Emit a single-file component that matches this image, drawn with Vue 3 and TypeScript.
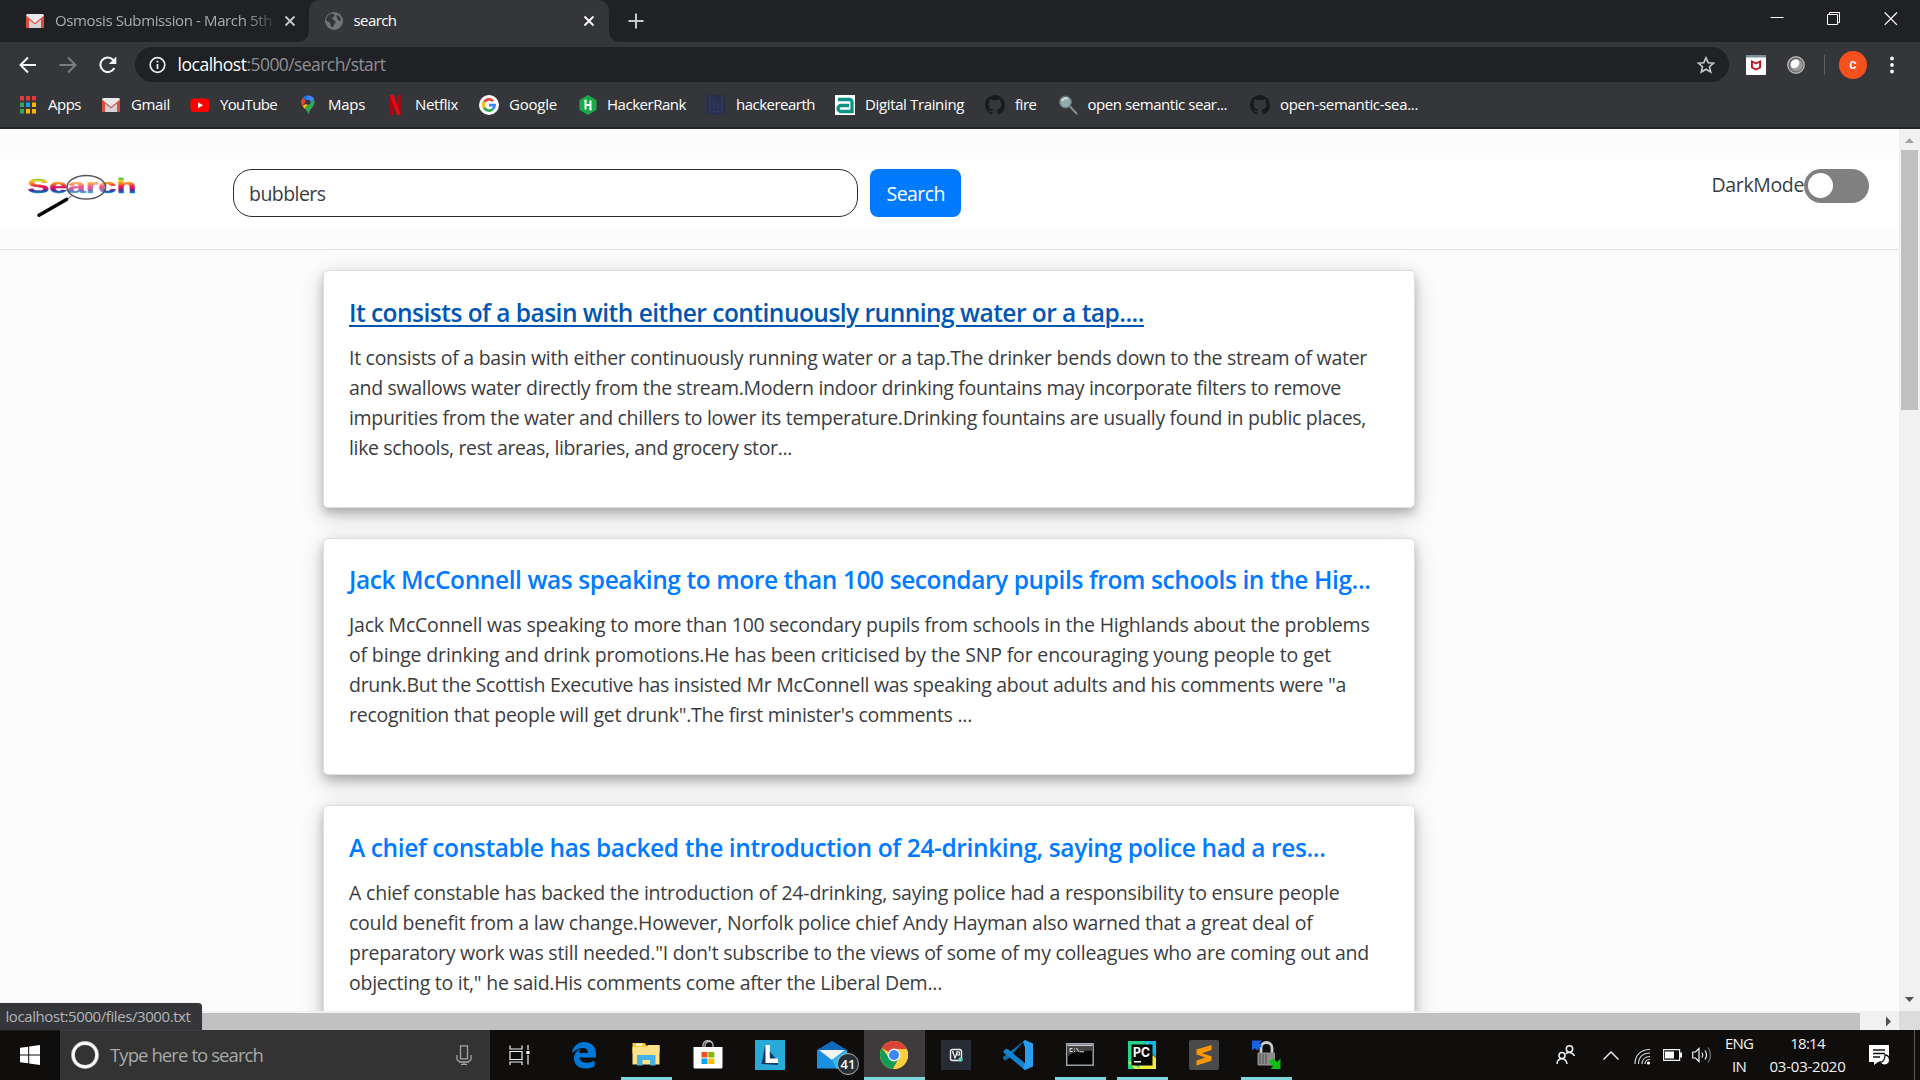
<script setup lang="ts">
interface Line { text: string; width: number }
interface Result { title: Line; hovered?: boolean; lines: Line[] }
interface Bookmark { icon: string; label: string; width: number; slot?: number }
interface TaskItem { id: string; open?: boolean; active?: boolean }

// Tracks a single line of text so that it occupies the given width.
const vFit = {
  mounted(el: HTMLElement, binding: { value: number }) {
    el.style.letterSpacing = '0px'
    const range = document.createRange()
    range.selectNodeContents(el)
    const natural = range.getBoundingClientRect().width
    const count = (el.textContent ?? '').trim().length
    if (count > 0) el.style.letterSpacing = `${((binding.value - natural) / count).toFixed(4)}px`
  },
}

const bookmarks: Bookmark[] = [
  { icon: 'apps', label: 'Apps', width: 33 },
  { icon: 'gmail', label: 'Gmail', width: 39 },
  { icon: 'youtube', label: 'YouTube', width: 57, slot: 58 },
  { icon: 'maps', label: 'Maps', width: 37 },
  { icon: 'netflix', label: 'Netflix', width: 43, slot: 44 },
  { icon: 'google', label: 'Google', width: 48 },
  { icon: 'hackerrank', label: 'HackerRank', width: 79 },
  { icon: 'hackerearth', label: 'hackerearth', width: 79 },
  { icon: 'digital', label: 'Digital Training', width: 99, slot: 100 },
  { icon: 'github', label: 'fire', width: 21.5, slot: 22.5 },
  { icon: 'lens', label: 'open semantic sear...', width: 139.5, slot: 142.5 },
  { icon: 'github', label: 'open-semantic-sea...', width: 138 },
]

const results: Result[] = [
  {
    title: { text: 'It consists of a basin with either continuously running water or a tap....', width: 795 },
    hovered: true,
    lines: [
      { text: 'It consists of a basin with either continuously running water or a tap.The drinker bends down to the stream of water', width: 1018 },
      { text: 'and swallows water directly from the stream.Modern indoor drinking fountains may incorporate filters to remove', width: 992 },
      { text: 'impurities from the water and chillers to lower its temperature.Drinking fountains are usually found in public places,', width: 1017 },
      { text: 'like schools, rest areas, libraries, and grocery stor...', width: 443 },
    ],
  },
  {
    title: { text: 'Jack McConnell was speaking to more than 100 secondary pupils from schools in the Hig...', width: 1021.5 },
    lines: [
      { text: 'Jack McConnell was speaking to more than 100 secondary pupils from schools in the Highlands about the problems', width: 1020.5 },
      { text: 'of binge drinking and drink promotions.He has been criticised by the SNP for encouraging young people to get', width: 982 },
      { text: 'drunk.But the Scottish Executive has insisted Mr McConnell was speaking about adults and his comments were "a', width: 997 },
      { text: 'recognition that people will get drunk".The first minister\'s comments ...', width: 623 },
    ],
  },
  {
    title: { text: 'A chief constable has backed the introduction of 24-drinking, saying police had a res...', width: 976.5 },
    lines: [
      { text: 'A chief constable has backed the introduction of 24-drinking, saying police had a responsibility to ensure people', width: 990.5 },
      { text: 'could benefit from a law change.However, Norfolk police chief Andy Hayman also warned that a great deal of', width: 963.5 },
      { text: 'preparatory work was still needed."I don\'t subscribe to the views of some of my colleagues who are coming out and', width: 1020 },
      { text: 'objecting to it," he said.His comments come after the Liberal Dem...', width: 593 },
    ],
  },
]

const tasks: TaskItem[] = [
  { id: 'edge' },
  { id: 'explorer', open: true },
  { id: 'store' },
  { id: 'lex' },
  { id: 'mail' },
  { id: 'chrome', open: true, active: true },
  { id: 'infy' },
  { id: 'vscode' },
  { id: 'cmd', open: true },
  { id: 'pycharm', open: true },
  { id: 'sublime' },
  { id: 'lock', open: true },
]
</script>

<template>
  <div class="screen">
    <div class="tabstrip">
      <div class="tab tab-idle">
        <svg class="tab-icon" width="20" height="20" viewBox="0 0 20 20">
          <rect x="1" y="3" width="18" height="14" rx="1.5" fill="#e9e9e9" />
          <path d="M4 17V8l6 5 6-5v9z" fill="#d5d5d5" />
          <path d="M1 17V4.500L10 12l9-7.500V17h-3V8.500L10 13.500 4 8.500V17z" fill="#dd4b3e" />
        </svg>
        <span class="tab-label idle-label"><span v-fit="217" class="fit">Osmosis Submission - March 5th</span></span>
        <svg class="close" width="12" height="12" viewBox="0 0 12 12"><path d="M1.500 1.500l9 9M10.500 1.500l-9 9" stroke="#c8c9cb" stroke-width="1.800" /></svg>
      </div>
      <div class="tab tab-active">
        <svg class="tab-icon" width="20" height="20" viewBox="0 0 20 20">
          <circle cx="10" cy="10" r="9" fill="#70757a" />
          <path d="M7 2.500c3 0 4 1 3.500 2.500S8 6 8.500 8s2.500.5 3 2.500-1 1.500-1.500 3-1 3-2.500 2.500-.5-3-2-4.500-3-1-3.500-2.500C2.500 5.500 5 3 7 2.500zM13 4c2 .5 4 3 4 5.500-1.500 1-3 0-3.500-1.500S12 5 13 4z" fill="#35363a" />
        </svg>
        <span class="tab-label"><span v-fit="43" class="fit">search</span></span>
        <svg class="close" width="12" height="12" viewBox="0 0 12 12"><path d="M1.500 1.500l9 9M10.500 1.500l-9 9" stroke="#fff" stroke-width="1.800" /></svg>
      </div>
      <svg class="plus" width="16" height="16" viewBox="0 0 16 16"><path d="M8 0.500v15M0.500 8h15" stroke="#c8c9cb" stroke-width="2" /></svg>
      <div class="window-controls">
        <svg width="14" height="14" viewBox="0 0 14 14"><path d="M0.500 5.500h13" stroke="#fff" /></svg>
        <svg width="14" height="14" viewBox="0 0 14 14"><path d="M0.500 2.500h10v10H0.500zM2.500 2.500V0.500h10v10h-2" fill="none" stroke="#fff" /></svg>
        <svg width="14" height="14" viewBox="0 0 14 14"><path d="M0.700 0.500l12.300 12.300M13 0.500L0.700 12.800" stroke="#fff" stroke-width="1.200" /></svg>
      </div>
    </div>

    <div class="toolbar">
      <svg class="nav-icon" width="18" height="18" viewBox="0 0 18 18"><path d="M17 9H2M9 1.500L1.500 9 9 16.500" fill="none" stroke="#f1f3f4" stroke-width="2" /></svg>
      <svg class="nav-icon" width="18" height="18" viewBox="0 0 18 18"><path d="M0.500 9H16M9 1.500L16.500 9 9 16.500" fill="none" stroke="#7b7c7f" stroke-width="2" /></svg>
      <svg class="nav-icon" width="18" height="18" viewBox="0 0 18 18"><path d="M15.300 12A7.300 7.300 0 1 1 14 3.700L15.500 5.500" fill="none" stroke="#f1f3f4" stroke-width="2.100" /><path d="M17.300 0.500v7.500H9.800z" fill="#f1f3f4" /></svg>
      <div class="omnibox">
        <svg width="18" height="18" viewBox="0 0 18 18"><circle cx="8.500" cy="9" r="7.300" fill="none" stroke="#e8eaed" stroke-width="1.700" /><path d="M8.500 8v5M8.500 4.800v1.800" stroke="#e8eaed" stroke-width="1.800" /></svg>
        <span class="url"><span v-fit="69" class="fit host">localhost</span><span v-fit="139" class="fit path">:5000/search/start</span></span>
        <svg class="star" width="18" height="18" viewBox="0 0 18 18"><path d="M9 1.800l2.200 4.900 5.300.5-4 3.500 1.200 5.300L9 13.200 4.300 16l1.200-5.300-4-3.500 5.300-.5z" fill="none" stroke="#c5c6c8" stroke-width="1.600" /></svg>
      </div>
      <svg class="ext-shield" width="20" height="20" viewBox="0 0 20 20"><rect width="20" height="20" rx="1" fill="#fff" /><rect width="20" height="2.500" fill="#79909c" /><path d="M5 5l5 2.500L15 5v8l-5 2.500L5 13zM6.900 7.800v4.200l3.100 1.500 3.100-1.500V7.800L10 9.400z" fill="#c0121c" fill-rule="evenodd" /></svg>
      <svg class="ext-ball" width="18" height="18" viewBox="0 0 18 18"><circle cx="9" cy="9" r="8.200" fill="#606060" stroke="#b5b5b5" stroke-width="1.400" /><circle cx="9.300" cy="9.300" r="6.300" fill="#9b9b9b" /><ellipse cx="8" cy="7.800" rx="4" ry="4.800" transform="rotate(40 8 7.800)" fill="#fff" /></svg>
      <span class="divider"></span>
      <span class="avatar">c</span>
      <svg class="menu-dots" width="4" height="18" viewBox="0 0 4 18"><circle cx="2" cy="2.500" r="1.900" fill="#f1f3f4" /><circle cx="2" cy="9" r="1.900" fill="#f1f3f4" /><circle cx="2" cy="15.500" r="1.900" fill="#f1f3f4" /></svg>
    </div>

    <div class="bookmarks">
      <div v-for="(b, i) in bookmarks" :key="i" class="bookmark">
        <svg width="20" height="20" viewBox="0 0 20 20">
          <template v-if="b.icon === 'apps'">
            <path d="M2 1h4v4.500H2zM8 1h4v4.500H8zM14 1h4v4.500H14z" fill="#e53935" />
            <path d="M2 7.500h4V12H2zM2 14h4v4.500H2z" fill="#34a853" />
            <path d="M8 7.500h4V12H8z" fill="#2196f3" />
            <path d="M14 7.500h4V12H14zM8 14h4v4.500H8zM14 14h4v4.500H14z" fill="#fbb606" />
          </template>
          <template v-else-if="b.icon === 'gmail'">
            <rect x="1" y="3" width="18" height="14" rx="1.500" fill="#e9e9e9" />
            <path d="M4 17V8l6 5 6-5v9z" fill="#d5d5d5" />
            <path d="M1 17V4.500L10 12l9-7.500V17h-3V8.500L10 13.500 4 8.500V17z" fill="#dd4b3e" />
          </template>
          <template v-else-if="b.icon === 'youtube'">
            <rect x="0.500" y="3.500" width="19" height="13.500" rx="3.500" fill="#f00" />
            <path d="M8 7.300l5 3-5 3z" fill="#fff" />
          </template>
          <template v-else-if="b.icon === 'maps'">
            <path d="M10 0.500a6.800 6.800 0 0 0-5.200 2.300L8 5.500l4.500-4.500z" fill="#1a73e8" />
            <path d="M4.800 2.800A6.800 6.800 0 0 0 4.500 11L8 6.500z" fill="#ea4335" />
            <path d="M4.500 11l2 2.700L13 6z" fill="#fbbc04" />
            <path d="M12.500 1A6.800 6.800 0 0 1 16.500 7c0 5-4.500 6-6 12.500-.5-2.500-2-4.500-4-6L16 4z" fill="#34a853" />
            <path d="M10 0.500a6.800 6.800 0 0 1 6 3.500l-4 4.500L8 5.500z" fill="#4285f4" />
            <circle cx="10" cy="7.200" r="2.500" fill="#35363a" />
          </template>
          <template v-else-if="b.icon === 'netflix'">
            <path d="M5 0h3.700v20L5 20zM12 0h3.700v20H12z" fill="#b1060f" />
            <path d="M5 0h3.700l7 20H12z" fill="#e50914" />
          </template>
          <template v-else-if="b.icon === 'google'">
            <circle cx="10" cy="10" r="10" fill="#fff" />
            <g fill="none" stroke-width="2.700">
              <path d="M5.200 7.200A5.600 5.600 0 0 1 14 6" stroke="#ea4335" />
              <path d="M5.200 12.800a5.600 5.600 0 0 1 0-5.600" stroke="#fbbc05" />
              <path d="M13.700 14.200a5.600 5.600 0 0 1-8.500-1.400" stroke="#34a853" />
              <path d="M10 10.200h5.600a5.600 5.600 0 0 1-1.900 4" stroke="#4285f4" />
            </g>
          </template>
          <template v-else-if="b.icon === 'hackerrank'">
            <path d="M11 0l8.500 5v10L11 20l-8.500-5V5z" fill="#1ba94c" />
            <path d="M8.500 5.500v9M13.500 5.500v9M8.500 10h5" stroke="#fff" stroke-width="1.900" />
            <path d="M6.700 6.500l1.800-2.500 1.800 2.500zM11.700 13.500l1.800 2.500 1.800-2.500z" fill="#fff" />
          </template>
          <template v-else-if="b.icon === 'hackerearth'">
            <rect width="20" height="20" rx="1" fill="#2a304c" />
            <path d="M4 3v13M16 3v13M8 5v9M8 9h4.500v5M4 16.500h12" fill="none" stroke="#2f3860" stroke-width="1.600" />
          </template>
          <template v-else-if="b.icon === 'digital'">
            <rect width="20" height="20" fill="#fff" />
            <path d="M3 4.500h11.500a2.500 2.500 0 0 1 2.500 2.500v9.500H6a3 3 0 0 1 0-6h8" fill="none" stroke="#0a9384" stroke-width="3.300" />
          </template>
          <template v-else-if="b.icon === 'github'">
            <path transform="scale(1.25)" d="M8 0C3.580 0 0 3.580 0 8c0 3.540 2.290 6.530 5.470 7.590.4.070.55-.17.55-.38 0-.19-.01-.82-.01-1.490-2.010.37-2.530-.49-2.690-.94-.09-.23-.48-.94-.82-1.130-.28-.15-.68-.52-.01-.53.63-.01 1.080.58 1.230.82.72 1.210 1.870.87 2.330.66.070-.52.280-.87.510-1.070-1.780-.2-3.640-.89-3.640-3.950 0-.87.310-1.590.82-2.150-.08-.2-.36-1.020.08-2.120 0 0 .67-.21 2.200.82a7.600 7.600 0 0 1 4 0c1.530-1.040 2.200-.82 2.200-.82.44 1.100.16 1.920.08 2.120.51.56.82 1.270.82 2.150 0 3.070-1.870 3.750-3.650 3.950.29.25.54.73.54 1.480 0 1.070-.01 1.930-.01 2.200 0 .21.15.46.55.38A8 8 0 0 0 16 8c0-4.420-3.580-8-8-8z" fill="#191a1c" />
          </template>
          <template v-else>
            <path d="M11.500 11l7 7.500" stroke="#8b8b8b" stroke-width="2" stroke-linecap="round" />
            <circle cx="7.500" cy="7" r="5.800" fill="#93aaae" stroke="#66767a" stroke-width="1.300" />
            <path d="M4 6a4 4 0 0 1 6-2" fill="none" stroke="#dfe9eb" stroke-width="1.500" />
          </template>
        </svg>
        <span class="bookmark-label" :style="{ width: (b.slot ?? b.width) + 'px' }"><span v-fit="b.width" class="fit">{{ b.label }}</span></span>
      </div>
    </div>

    <div class="viewport">
      <div class="page">
        <header class="navbar">
          <svg class="logo" width="110" height="46" viewBox="0 0 110 46">
            <defs>
              <linearGradient id="rainbow" gradientUnits="userSpaceOnUse" x1="0" y1="4" x2="0" y2="19">
                <stop offset="0" stop-color="#2fb34a" />
                <stop offset="0.18" stop-color="#e8d81c" />
                <stop offset="0.38" stop-color="#f57a28" />
                <stop offset="0.55" stop-color="#ec1c4b" />
                <stop offset="0.7" stop-color="#c3117c" />
                <stop offset="0.85" stop-color="#2a3f9f" />
                <stop offset="1" stop-color="#0a84cf" />
              </linearGradient>
            </defs>
            <text x="-0.500" y="18.500" textLength="109" lengthAdjust="spacingAndGlyphs" class="logo-text" fill="url(#rainbow)" stroke="url(#rainbow)" stroke-width="0.400">Search</text>
            <path d="M43.500 22l-4 3" stroke="#999" stroke-width="1.500" />
            <path d="M38.500 25.500L11 41.200" stroke="#050505" stroke-width="3.600" stroke-linecap="round" />
            <ellipse cx="58.300" cy="13.200" rx="19.300" ry="11.800" fill="#fff" fill-opacity="0.300" stroke="#555" stroke-width="1.500" />
          </svg>
          <div class="search-input"><span v-fit="76.500" class="fit">bubblers</span></div>
          <div class="search-button"><span v-fit="58.500" class="fit">Search</span></div>
          <div class="dark-mode">
            <span class="dark-label"><span v-fit="92.500" class="fit">DarkMode</span></span>
            <span class="switch"><span class="knob"></span></span>
          </div>
        </header>
        <div class="rule"></div>
        <main class="results">
          <article v-for="(r, i) in results" :key="i" class="card">
            <h5 class="title" :class="{ hovered: r.hovered }"><span v-fit="r.title.width" class="fit">{{ r.title.text }}</span></h5>
            <p class="body">
              <span v-for="(l, j) in r.lines" :key="j" v-fit="l.width" class="line">{{ l.text }}</span>
            </p>
          </article>
        </main>
      </div>
      <div class="vscroll">
        <svg width="21" height="21" viewBox="0 0 21 21"><path d="M6 14l4.500-5 4.500 5z" fill="#a3a3a3" /></svg>
        <div class="vthumb"></div>
        <svg class="down" width="21" height="21" viewBox="0 0 21 21"><path d="M6 7l4.500 5L15 7z" fill="#505050" /></svg>
      </div>
    </div>

    <div class="hscroll">
      <div class="hthumb"></div>
      <svg class="right" width="21" height="19" viewBox="0 0 21 19"><path d="M8 5.500l5 5-5 5z" fill="#505050" /></svg>
      <div class="corner"></div>
      <div class="status"><span v-fit="185" class="fit">localhost:5000/files/3000.txt</span></div>
    </div>

    <div class="taskbar">
      <div class="start">
        <svg width="20" height="20" viewBox="0 0 20 20"><path d="M0 2.800l8.200-1.100v7.800H0zM9.200 1.500L20 0v9.500H9.200zM0 10.500h8.200v7.800L0 17.200zM9.200 10.500H20V20L9.200 18.500z" fill="#fff" /></svg>
      </div>
      <div class="cortana">
        <svg width="28" height="28" viewBox="0 0 28 28"><circle cx="14" cy="14" r="12" fill="none" stroke="#bdbdbd" stroke-width="3.800" /><circle cx="14" cy="14" r="11.800" fill="none" stroke="#fff" stroke-width="2.400" /></svg>
        <span class="cortana-label"><span v-fit="153" class="fit">Type here to search</span></span>
        <svg class="mic" width="16" height="20" viewBox="0 0 16 20"><path d="M4.500 0.800h7v13h-7zM1 10v4.500l2.500 2.500h9L15 14.500V10M8 17v2.500M5 19.300h6" fill="none" stroke="#a5a5a5" stroke-width="1.300" /></svg>
      </div>
      <div class="taskview">
        <svg width="22" height="20" viewBox="0 0 22 20"><path d="M1 0.500v3.500h12V0.500M1 6.500h12v8H1zM1 20v-3h12v3M19 0v5M19 10v9.500" fill="none" stroke="#f2f2f2" stroke-width="1.200" /><rect x="17.500" y="6" width="3" height="3" fill="#fff" /></svg>
      </div>
      <div v-for="t in tasks" :key="t.id" class="task" :class="{ open: t.open, active: t.active }">
        <svg width="30" height="30" viewBox="0 0 30 30">
          <template v-if="t.id === 'edge'">
            <path d="M3 13C4 6 9 2 15.500 2 23 2 27 7.500 27 14v3.500H10.500c.3 3.500 3.500 5.200 7.500 5.200 2.800 0 5-.7 7.500-2.200v5.700c-2.500 1.500-5.500 2.300-9 2.300-7 0-11.500-4-11.500-10 0-4.500 2.500-8 6.500-9.800-1 1.300-1.300 2.600-1.500 4.300h9c0-3-1.700-5-5-5-4 0-8 2-11 5z" fill="#0078d7" />
          </template>
          <template v-else-if="t.id === 'explorer'">
            <path d="M1.500 3h12l2 2.500h13V13h-27z" fill="#ffc933" />
            <rect x="5" y="3.800" width="6" height="2" fill="#fff" />
            <path d="M1.500 7h14l2-2h11v19.500h-27z" fill="#ffe28a" />
            <path d="M6 15h18.500v10.500h-5.500V20h-7.500v5.500H6z" fill="#45b3e7" />
          </template>
          <template v-else-if="t.id === 'store'">
            <path d="M10 8V5.500a5 5 0 0 1 10 0V8M12 7V5.500a4 4 0 0 1 8 0" fill="none" stroke="#b8b8b8" stroke-width="1.300" />
            <path d="M0.500 7h29v20a1.500 1.500 0 0 1-1.500 1.500H2A1.500 1.500 0 0 1 0.500 27z" fill="#fff" />
            <rect x="8.500" y="12" width="6" height="5.500" fill="#f25022" /><rect x="15.300" y="12" width="6" height="5.500" fill="#7fba00" />
            <rect x="8.500" y="18.500" width="6" height="5.500" fill="#00a4ef" /><rect x="15.300" y="18.500" width="6" height="5.500" fill="#ffb900" />
          </template>
          <template v-else-if="t.id === 'lex'">
            <rect width="30" height="30" fill="#28a9d8" />
            <path d="M10 6l-3.500 18 16.500 1V21z" fill="#163a63" />
            <path d="M10.500 5h4.300v13.500h8.200v4.500H10.500z" fill="#fff" />
          </template>
          <template v-else-if="t.id === 'mail'">
            <path d="M0 10l15-9 15 9z" fill="#0f6cbd" />
            <path d="M0 10h30v18.500H0z" fill="#1d8fe0" />
            <path d="M2 10h26L15 20z" fill="#f4f4f4" /><path d="M15 19.500l15-9v18H19z" fill="#35b8f1" />
          </template>
          <template v-else-if="t.id === 'chrome'">
            <circle cx="15" cy="15" r="14" fill="#ffcd40" />
            <path d="M15 15L2.900 8A14 14 0 0 1 27.700 9H15z" fill="#db4437" />
            <path d="M2.900 8A14 14 0 0 0 14 29l6-11-5-3-5 3z" fill="#0f9d58" />
            <path d="M15 9h12.700A14 14 0 0 1 14 29l6.200-11z" fill="#ffcd40" />
            <circle cx="15" cy="15" r="6.400" fill="#f1f1f1" /><circle cx="15" cy="15" r="5" fill="#4285f4" />
          </template>
          <template v-else-if="t.id === 'infy'">
            <rect width="30" height="30" fill="#272b36" />
            <rect x="9.500" y="9.500" width="11" height="11" rx="2" fill="none" stroke="#f0f0f0" stroke-width="1.400" />
            <path d="M11.500 11l2.500 7 2.500-7M16 12h2.500v3H16zM12 11v3" fill="none" stroke="#f0f0f0" stroke-width="1.200" />
            <circle cx="19.500" cy="19.500" r="2.200" fill="#5fd3bc" />
          </template>
          <template v-else-if="t.id === 'vscode'">
            <path d="M22 0L5 19l-3 1.500L0 18.500V17L22 0z" fill="#0b6fb4" />
            <path d="M0.500 11L3 8.800l2 .5L22 23v7L0.500 12.500z" fill="#1482cc" />
            <path d="M22 0l8 3.500v23L22 30l-2-1.500 2-5.500V7.500L20 1.500z" fill="#2a9df0" />
            <path d="M22 7.500v15L12 15z" fill="#100d0d" />
          </template>
          <template v-else-if="t.id === 'cmd'">
            <rect x="1.700" y="3.700" width="26.500" height="21.500" fill="#050505" stroke="#a3a9b0" stroke-width="1.400" />
            <path d="M2.500 4.500h25v1.500h-25z" fill="#c9ced6" /><path d="M2.500 6h25v5C14 10 5 13 2.500 17z" fill="#454545" />
            <path d="M5 8.500h2.500M5 8.500v3h2.500M9.500 8.500v1M9.500 11v1M11.500 8l2.500 4M14.500 11.800H19" fill="none" stroke="#ddd" stroke-width="1" />
          </template>
          <template v-else-if="t.id === 'pycharm'">
            <path d="M1 1h18L14 29H1z" fill="#21d789" /><path d="M17 1h12v17L20 8z" fill="#18b6e6" />
            <path d="M20 1l3 12 6 5v11H8L1 22l18-8z" fill="#eee93f" /><path d="M1 1h16l-5 27L1 20z" fill="#25d389" />
            <rect x="4.500" y="4.500" width="21" height="21" fill="#080808" />
            <text x="6" y="16.500" class="pc-text" fill="#fff" textLength="17" lengthAdjust="spacingAndGlyphs">PC</text>
            <rect x="7" y="21" width="7" height="1.500" fill="#fff" />
          </template>
          <template v-else-if="t.id === 'sublime'">
            <rect width="30" height="30" rx="2" fill="#4b4b4b" />
            <path d="M22.500 5v5L13 13.200l9.500 3v4.500L7.500 25.500v-5l9-3-9-3V9.500z" fill="#ff9800" />
          </template>
          <template v-else>
            <path d="M10 15V8a5.500 5.500 0 0 1 11 0v7" fill="none" stroke="#c9c9c9" stroke-width="2.800" />
            <rect x="6.500" y="12.500" width="17.500" height="13" rx="1" fill="#8d8d8d" />
            <path d="M9 14v10M12 14v10M15 14v10" stroke="#5d5d5d" stroke-width="1.300" />
            <path d="M1 0.500h10L8.500 3.300l2.500 2.500L6 10.500 3.800 8 1 10.500z" fill="#1665e8" />
            <path d="M29.500 29h-10l2.500-2.700-4-4L22 18l4 4 3.500-3.500z" fill="#10c010" />
          </template>
        </svg>
        <span v-if="t.id === 'mail'" class="badge">41</span>
      </div>
      <div class="tray">
        <svg class="people" width="20" height="20" viewBox="0 0 20 20"><g fill="none" stroke="#f2f2f2" stroke-width="1.500"><circle cx="13.500" cy="4" r="3.200" /><circle cx="6" cy="10.500" r="3" /><path d="M10 9c1-2 6-2.500 8.500 2M1 19c.5-7 9-7 10 0" /></g></svg>
        <svg class="chevron" width="16" height="9" viewBox="0 0 16 9"><path d="M0.500 8.500L8 1l7.500 7.500" fill="none" stroke="#f2f2f2" stroke-width="1.400" /></svg>
        <svg class="wifi" width="17" height="17" viewBox="0 0 17 17"><g fill="none" stroke="#d8d8d8" stroke-width="1.200"><path d="M1 16C1 7 7 1.500 16 1.500M4.500 16C4.500 9 9 5 16 5M8 16c0-4.500 3-7.500 8-7.500" /><path d="M11 16c0-2.500 2-4.500 5-4.500" /></g><circle cx="14.500" cy="15" r="1.600" fill="#fff" /></svg>
        <svg class="battery" width="19" height="12" viewBox="0 0 19 12"><path d="M0.600 0.600h16v10.800h-16z" fill="none" stroke="#f2f2f2" stroke-width="1.200" /><rect x="2" y="2.500" width="9" height="7" fill="#fff" /><rect x="17" y="3.500" width="2" height="5" fill="#f2f2f2" /></svg>
        <svg class="speaker" width="20" height="18" viewBox="0 0 20 18"><path d="M0.700 6h2.800L7 2.500v13L3.500 12H0.700z" fill="none" stroke="#f2f2f2" stroke-width="1.200" /><path d="M10 6.500q1.500 2.500 0 5M13 4.500q3 4.500 0 9" fill="none" stroke="#f2f2f2" stroke-width="1.200" /><path d="M16 1.500q5 7.500 0 15" fill="none" stroke="#777" stroke-width="1.200" /></svg>
        <div class="stack lang"><span><span v-fit="28" class="fit">ENG</span></span><span><span v-fit="14" class="fit">IN</span></span></div>
        <div class="stack clock"><span><span v-fit="34.500" class="fit">18:14</span></span><span><span v-fit="76" class="fit">03-03-2020</span></span></div>
        <svg class="notify" width="21" height="20" viewBox="0 0 21 20"><path d="M0 0h20v17H9l-4 3v-3H0z" fill="#fff" /><path d="M4 5h12M4 8.500h12M4 12h7" stroke="#171313" stroke-width="1.300" /><path d="M16 10a5 5 0 1 1-5 7c3 .5 5-2.500 5-7z" fill="#fff" stroke="#171313" stroke-width="1.300" /></svg>
        <span class="peek"></span>
      </div>
    </div>
  </div>
</template>

<style>
html, body { margin: 0; overflow: hidden; background: #fcfcfc; }
</style>

<style scoped>
.screen {
  width: 1920px;
  height: 1080px;
  overflow: hidden;
  display: flex;
  flex-direction: column;
  font-family: "Open Sans", "Noto Sans", sans-serif;
}
.screen svg { display: block; flex: none; }
.fit { white-space: nowrap; }

.tabstrip { height: 42px; flex: none; display: flex; background: #202124; font-size: 15px; }
.tab { display: flex; align-items: center; box-sizing: border-box; height: 42px; }
.tab-idle { width: 309px; padding-left: 25px; color: #a8abaf; }
.tab-active { position: relative; width: 300px; padding-left: 15px; background: #35363a; border-radius: 10px 10px 0 0; color: #fff; }
.tab-active::before, .tab-active::after { content: ""; position: absolute; bottom: 0; width: 10px; height: 10px; }
.tab-active::before { left: -10px; background: radial-gradient(circle at 0 0, transparent 9.500px, #35363a 10px); }
.tab-active::after { right: -10px; background: radial-gradient(circle at 100% 0, transparent 9.500px, #35363a 10px); }
.tab-label { flex: none; margin-left: 10px; margin-bottom: 2px; line-height: 20px; overflow: hidden; white-space: nowrap; }
.idle-label { width: 218px; -webkit-mask-image: linear-gradient(to right, #000 190px, transparent 224px); mask-image: linear-gradient(to right, #000 190px, transparent 224px); }
.tab-idle .close { margin-left: 11px; }
.tab-active .tab-label { margin-left: 9.500px; }
.tab-active .close { margin-left: auto; margin-right: 14px; }
.plus { margin: 13px 0 0 19px; }
.window-controls { display: flex; gap: 43px; margin: 12px 22px 0 auto; }

.toolbar { height: 45px; flex: none; display: flex; align-items: center; background: #35363a; padding-left: 18.500px; box-sizing: border-box; }
.nav-icon { margin-right: 22px; }
.omnibox { box-sizing: border-box; display: flex; align-items: center; width: 1594px; height: 35px; margin-left: -3.500px; padding-left: 14px; border-radius: 18px; background: #202124; font-size: 17.500px; }
.url { margin-left: 10.500px; margin-bottom: 2px; white-space: nowrap; line-height: 24px; }
.host { color: #fff; }
.path { color: #8d9094; }
.star { margin-left: auto; margin-right: 14px; }
.ext-shield { margin-left: 17px; }
.ext-ball { margin-left: 21px; }
.divider { width: 1px; height: 20px; margin-left: 19px; background: #5f6064; }
.avatar { width: 28px; height: 28px; margin-left: 14px; border-radius: 50%; background: #f4511e; color: #fff; font: 500 14px/27px Roboto, sans-serif; text-align: center; }
.menu-dots { margin-left: 23px; }

.bookmarks { height: 42px; box-sizing: border-box; flex: none; display: flex; gap: 20px; padding: 8px 0 0 18px; background: #35363a; border-bottom: 2px solid #232427; font-size: 15px; color: #fff; }
.bookmark { display: flex; gap: 10px; height: 20px; }
.bookmark-label { line-height: 18px; white-space: nowrap; }

.viewport { height: 882px; flex: none; display: flex; overflow: hidden; }
.page { width: 1899px; height: 882px; flex: none; overflow: hidden; background: #fcfcfc; color: #3a3c3f; }
.navbar { display: flex; align-items: flex-start; height: 70px; box-sizing: border-box; margin-top: 30px; padding: 10px 30px 0 28px; background: #fff; font-size: 19.500px; }
.logo { margin-top: 5px; }
.logo-text { font: bold 20.500px "Liberation Sans", Arial, sans-serif; }
.search-input { box-sizing: border-box; width: 625px; height: 48px; margin-left: 95px; padding-left: 15px; border: 1px solid #2c2c2c; border-radius: 19px; line-height: 47px; }
.search-button { width: 91px; height: 48px; margin-left: 12px; border-radius: 8px; background: #007bff; color: #fff; line-height: 49px; box-sizing: border-box; padding-left: 16.500px; }
.dark-mode { display: flex; margin-left: auto; }
.dark-label { line-height: 32px; width: 92.500px; white-space: nowrap; }
.switch { width: 65px; height: 34px; border-radius: 17px; background: #808080; box-sizing: border-box; padding: 4px; }
.knob { display: block; width: 25px; height: 25px; border-radius: 50%; background: #fff; }
.rule { height: 1px; margin-top: 20px; background: #dfdfdf; }
.results { display: flex; flex-direction: column; gap: 30.100px; padding: 20.400px 0 0 323px; }
.card { box-sizing: border-box; flex: none; width: 1092px; height: 237.400px; padding: 25.500px 0 0 25px; background: #fff; border: 1px solid #dedede; border-radius: 5px; box-shadow: 0 5px 10px rgba(0, 0, 0, 0.200), 0 7.500px 25px rgba(0, 0, 0, 0.190); }
.title { margin: 0 0 16px; font-size: 24.500px; font-weight: 550; line-height: 31px; height: 30px; color: #007bff; white-space: nowrap; }
.title.hovered { color: #0056b3; text-decoration: underline; text-decoration-thickness: 2px; text-underline-offset: 3px; }
.body { margin: 0; font-size: 19.500px; line-height: 30px; }
.line { display: block; white-space: nowrap; }

.vscroll { width: 21px; background: #f1f1f1; display: flex; flex-direction: column; }
.vthumb { width: 17px; height: 260px; margin-left: 2px; background: #c1c1c1; }
.down { margin-top: auto; }

.hscroll { position: relative; height: 19px; flex: none; display: flex; background: #f1f1f1; }
.hthumb { width: 1860px; height: 17px; margin-top: 2px; background: #c1c1c1; }
.right { margin-left: 18px; }
.corner { width: 21px; background: #dcdcdc; }
.status { position: absolute; left: 0; bottom: 0; width: 202px; height: 27px; box-sizing: border-box; padding-left: 5.500px; background: #35363a; border-radius: 0 4px 0 0; color: #b2b5b9; font-size: 15px; line-height: 27px; white-space: nowrap; box-shadow: 0 0 1px #999; }

.taskbar { height: 50px; flex: none; display: flex; background: #100d0d; color: #f2f2f2; }
.start { width: 60px; display: flex; align-items: center; justify-content: center; }
.cortana { width: 430px; box-sizing: border-box; display: flex; align-items: center; padding-left: 11px; background: #333; color: #a8a8a8; font-size: 18.500px; }
.cortana-label { margin-left: 11px; line-height: 26px; white-space: nowrap; }
.mic { margin-left: auto; margin-right: 18px; }
.taskview { width: 63px; box-sizing: border-box; padding: 15px 0 0 19px; }
.task { position: relative; width: 62px; box-sizing: border-box; padding: 10px 0 0 16px; }
.task.open::after { content: ""; position: absolute; left: 6px; bottom: 0; width: 51px; height: 3px; background: #80d4dc; }
.task.active { background: linear-gradient(to right, #100d0d 1px, #3d3b3b 1px); }
.task.active::after { left: 1px; width: 61px; }
.badge { position: absolute; left: 36px; top: 23px; width: 20px; height: 20px; border: 1px solid #aaa; border-radius: 50%; background: #25303a; color: #fff; font-size: 13px; font-weight: 600; line-height: 20px; text-align: center; }
.pc-text { font: bold 13px Inter, sans-serif; }
.tray { display: flex; align-items: center; margin-left: auto; font-size: 15px; }
.chevron { margin-left: 27px; }
.wifi { margin-left: 15px; margin-top: 3px; }
.battery { margin-left: 12px; }
.speaker { margin-left: 10px; }
.stack { display: flex; flex-direction: column; align-items: center; line-height: 22.500px; margin-top: -1px; white-space: nowrap; }
.lang { width: 28px; margin-left: 13px; }
.clock { width: 77px; margin-left: 16px; }
.notify { margin-left: 23px; }
.peek { width: 1px; height: 50px; margin: 0 5px 0 24px; background: #5b5959; }
</style>
